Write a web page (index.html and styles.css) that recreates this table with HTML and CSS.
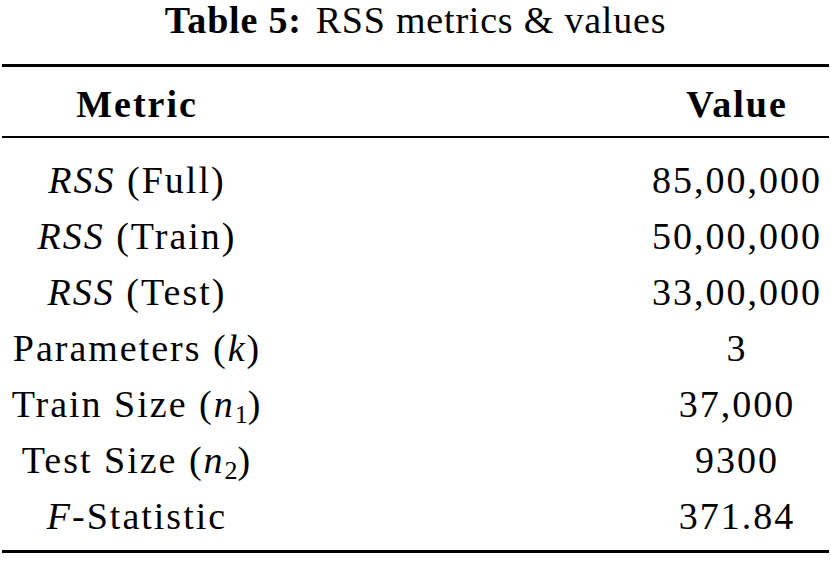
FILE: index.html
```html
<!DOCTYPE html>
<html lang="en">
<head>
<meta charset="utf-8">
<title>Table 5: RSS metrics &amp; values</title>
<link rel="stylesheet" href="styles.css">
</head>
<body>
<div class="page">
  <div class="caption"><span class="cap-label">Table 5:</span><span class="cap-text">RSS metrics &amp; values</span></div>
  <div class="table">
    <div class="thead">
      <div class="row head"><div class="metric">Metric</div><div class="value">Value</div></div>
    </div>
    <div class="tbody">
      <div class="row"><div class="metric"><i>RSS</i> (Full)</div><div class="value">85,00,000</div></div>
      <div class="row"><div class="metric"><i>RSS</i> (Train)</div><div class="value">50,00,000</div></div>
      <div class="row"><div class="metric"><i>RSS</i> (Test)</div><div class="value">33,00,000</div></div>
      <div class="row"><div class="metric">Parameters (<i>k</i>)</div><div class="value">3</div></div>
      <div class="row"><div class="metric">Train Size (<i>n</i><sub>1</sub>)</div><div class="value">37,000</div></div>
      <div class="row"><div class="metric">Test Size (<i>n</i><sub>2</sub>)</div><div class="value">9300</div></div>
      <div class="row"><div class="metric"><i>F</i>-Statistic</div><div class="value">371.84</div></div>
    </div>
  </div>
</div>
</body>
</html>
```
FILE: styles.css
```css
html, body {
  margin: 0;
  padding: 0;
  background: #ffffff;
}
body {
  font-family: "Liberation Serif", "Times New Roman", serif;
  color: #000;
  font-size: 38px;
  letter-spacing: 2px;
}
.page {
  width: 831px;
  padding: 0 2px;
  box-sizing: border-box;
}
.caption {
  line-height: 40px;
  text-align: center;
  margin-bottom: 24px;
  letter-spacing: 0.8px;
}
.cap-label {
  font-weight: bold;
  margin-right: 14px;
}
.table {
  border-top: 3px solid #000;
  border-bottom: 3px solid #000;
}
.thead {
  padding: 16px 0 11px;
  border-bottom: 2px solid #000;
  font-weight: bold;
}
.tbody {
  padding: 14px 0 6px;
}
.row {
  display: flex;
  justify-content: space-between;
  line-height: 56px;
}
.head {
  line-height: 42px;
}
.metric {
  width: 270px;
  text-align: center;
  white-space: nowrap;
}
.value {
  width: 184px;
  text-align: center;
  white-space: nowrap;
}
sub {
  font-size: 26px;
  line-height: 0;
  vertical-align: -6px;
  letter-spacing: 0;
}
```
